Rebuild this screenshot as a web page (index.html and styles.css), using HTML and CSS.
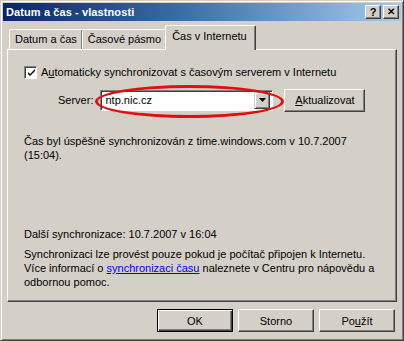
FILE: index.html
```html
<!DOCTYPE html>
<html lang="cs">
<head><meta charset="UTF-8">
<title>Datum a čas - vlastnosti</title>
<link rel="stylesheet" href="styles.css">
</head>
<body>
<div class="window">
  <div class="titlebar">
    <span class="title">Datum a čas - vlastnosti</span>
    <span class="tbtns">
      <span class="tbtn">?</span>
      <span class="tbtn close">✕</span>
    </span>
  </div>

  <div class="tabs">
    <div class="tab first">Datum a čas</div>
    <div class="tab">Časové pásmo</div>
    <div class="tab active">Čas v Internetu</div>
  </div>

  <div class="panel">
    <label class="check-row">
      <span class="checkbox">
        <svg width="9" height="9" viewBox="0 0 9 9"><path d="M1 4 L3 6 L8 1 L8 3 L3 8 L1 6 Z" fill="#000"/></svg>
      </span>
      <span>A<u>u</u>tomaticky synchronizovat s časovým serverem v Internetu</span>
    </label>

    <div class="server-row">
      <span class="server-label">Server:</span>
      <div class="combo">
        <span class="combo-text">ntp.nic.cz</span>
        <span class="combo-btn">
          <svg width="7" height="4" viewBox="0 0 7 4"><path d="M0 0 H7 L3.5 4 Z" fill="#000"/></svg>
        </span>
        <span class="circle"></span>
      </div>
      <button class="btn update"><u>A</u>ktualizovat</button>
    </div>

    <p class="status">Čas byl úspěšně synchronizován z time.windows.com v 10.7.2007<br>(15:04).</p>

    <p class="next">Další synchronizace: 10.7.2007 v 16:04</p>
    <p class="info">Synchronizaci lze provést pouze pokud je počítač připojen k Internetu.<br>
      Více informací o <a href="#">synchronizaci času</a> naleznete v Centru pro nápovědu a<br>
      odbornou pomoc.</p>
  </div>

  <div class="footer">
    <button class="btn ok">OK</button>
    <button class="btn">Storno</button>
    <button class="btn">Po<u>u</u>žít</button>
  </div>
</div>
</body>
</html>
```

FILE: styles.css
```css
*,*::before,*::after{box-sizing:border-box;margin:0;padding:0}
body{
  width:404px;
  height:341px;
  overflow:hidden;
  font-family:'Liberation Sans',Arial,sans-serif;
  font-size:11px;
  color:#000;
  background:#d4d0c8;
}

/* === WINDOW FRAME === */
.window{
  width:404px;
  height:341px;
  background:#d4d0c8;
  border:1px solid;
  border-color:#d4d0c8 #404040 #404040 #d4d0c8;
  box-shadow:inset 1px 1px 0 #fff, inset -1px -1px 0 #808080;
  padding:2px;
  display:flex;
  flex-direction:column;
}

.titlebar{
  height:18px;
  background:linear-gradient(90deg,#0a246a 0%,#3a6ea5 45%,#a6caf0 100%);
  display:flex;
  align-items:center;
  justify-content:space-between;
  padding:0 2px 0 3px;
}
.title{
  color:#fff;
  font-weight:bold;
  font-size:11px;
  letter-spacing:.1px;
}
.tbtns{display:flex;gap:2px}
.tbtn{
  width:16px;height:14px;
  background:#d4d0c8;
  border:1px solid;
  border-color:#fff #404040 #404040 #fff;
  box-shadow:inset -1px -1px 0 #808080;
  font-weight:bold;
  font-size:11px;
  line-height:12px;
  text-align:center;
}
.tbtn.close{font-size:10px}

/* === TABS === */
.tabs{
  display:flex;
  align-items:flex-end;
  height:24px;
  margin-top:4px;
  padding-left:6px;
  position:relative;
  z-index:1;
}
.tab{
  height:20px;
  padding:0 5px;
  line-height:18px;
  border:1px solid;
  border-bottom:none;
  border-color:#fff #404040 transparent #fff;
  box-shadow:inset -1px 0 0 #808080;
  border-radius:2px 2px 0 0;
  margin-right:-1px;
}
.tab.active{
  line-height:20px;
  padding:0 8px 0 6px;
  margin-left:-1px;
  background:#d4d0c8;
  margin-bottom:-1px;
  height:25px;
}

/* === PANEL === */
.panel{
  margin:0 4px 0 4px;
  height:253px;
  border:1px solid;
  border-color:#fff #404040 #404040 #fff;
  box-shadow:inset -1px -1px 0 #808080;
  padding:15px 0 0 16px;
  display:flex;
  flex-direction:column;
}
.check-row{display:flex;align-items:center;gap:4px;height:14px}
.checkbox{
  width:13px;height:13px;
  background:#fff;
  border:1px solid;
  border-color:#808080 #fff #fff #808080;
  box-shadow:inset 1px 1px 0 #404040;
  display:flex;align-items:center;justify-content:center;
  padding:1px 0 0 1px;
}

.server-row{
  display:flex;
  align-items:center;
  margin-top:9px;
  padding-left:34px;
  height:24px;
}
.server-label{margin-right:7px}
.combo{
  position:relative;
  width:173px;height:21px;
  background:#fff;
  border:1px solid;
  border-color:#808080 #fff #fff #808080;
  box-shadow:inset 1px 1px 0 #404040;
  display:flex;
  align-items:center;
  padding:2px 2px 2px 4px;
}
.combo-text{flex:1}
.combo-btn{
  width:16px;height:17px;
  background:#d4d0c8;
  border:1px solid;
  border-color:#d4d0c8 #404040 #404040 #d4d0c8;
  box-shadow:inset 1px 1px 0 #fff, inset -1px -1px 0 #808080;
  display:flex;align-items:center;justify-content:center;
}
.circle{
  position:absolute;
  left:-6px;top:-6px;
  width:189px;height:33px;
  border:3px solid #e01010;
  border-radius:50%;
  pointer-events:none;
}

.btn{
  font-family:inherit;
  font-size:11px;
  background:#d4d0c8;
  border:1px solid;
  border-color:#fff #404040 #404040 #fff;
  box-shadow:inset -1px -1px 0 #808080;
  color:#000;
}
.update{width:81px;height:23px;margin-left:11px}

.status{margin-top:22px;line-height:14px}
.next{margin-top:65px;line-height:14px}
.info{margin-top:6px;line-height:14px;white-space:nowrap}
.info a{color:#0000ff}

/* === FOOTER === */
.footer{
  display:flex;
  justify-content:flex-end;
  gap:5px;
  padding:7px 6px 0 0;
}
.footer .btn{width:76px;height:23px}
.footer .ok{border-color:#000;box-shadow:inset 1px 1px 0 #fff, inset -1px -1px 0 #404040, inset -2px -2px 0 #808080}
```
